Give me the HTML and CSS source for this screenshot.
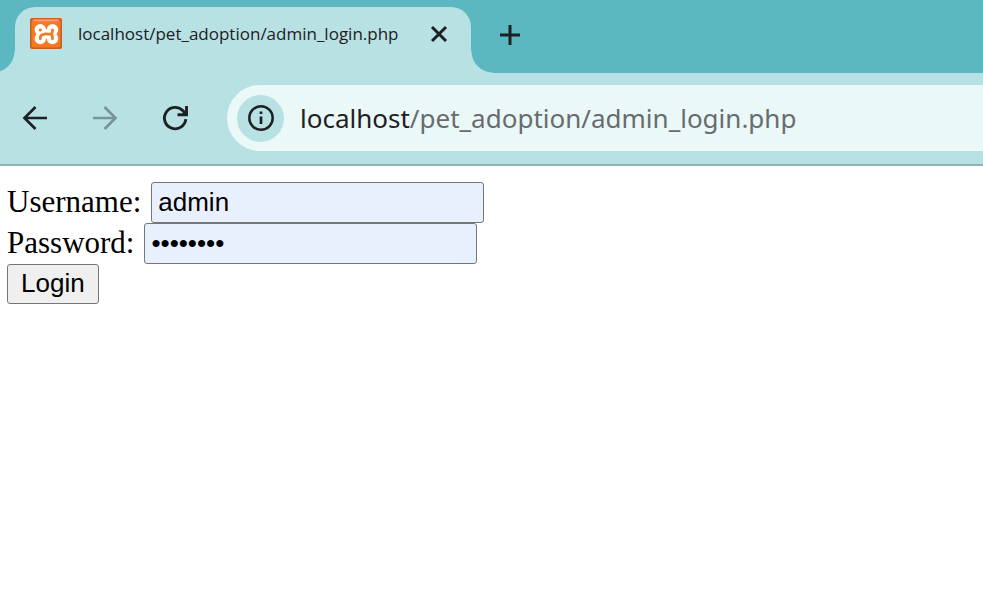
FILE: index.html
```html
<!DOCTYPE html>
<html lang="en">
<head>
<meta charset="utf-8">
<title>localhost/pet_adoption/admin_login.php</title>
<link rel="stylesheet" href="styles.css">
</head>
<body>
<header>
  <div class="tabs">
    <div class="tab">
      <svg class="favicon" viewBox="0 0 32 32" aria-hidden="true">
        <defs>
          <linearGradient id="shine" x1="0" y1="0" x2="0" y2="1"><stop offset="0" stop-color="#f6b587"/><stop offset="1" stop-color="#ee8132"/></linearGradient>
        </defs>
        <rect x="0" y="0" width="32" height="31" rx="2" fill="#c4601f"/>
        <rect x="1.5" y="1.5" width="29" height="28" rx="2" fill="#f47920"/>
        <path d="M3 1.500H29Q28 4 23 4H9Q4 4 3 1.500Z" fill="url(#shine)"/>
        <g fill="#fff">
          <circle cx="10.300" cy="11.800" r="5.700"/>
          <circle cx="22.500" cy="11.800" r="5.700"/>
          <circle cx="10.300" cy="20.500" r="5.700"/>
          <circle cx="22.500" cy="20.500" r="5.700"/>
          <rect x="6" y="11.500" width="20.500" height="9.500"/>
        </g>
        <circle cx="10.300" cy="12" r="1.600" fill="#f47920"/>
        <path d="M10.300 20.800V19Q10.500 17.200 13 16.500Q16 15.500 18 16.200H22M22.500 12V13L21.700 16.200L22.500 19.500V20.800" fill="none" stroke="#f47920" stroke-width="2.800" stroke-linecap="round" stroke-linejoin="round"/>
      </svg>
      <span class="title">localhost/pet_adoption/admin_login.php</span>
      <button class="icon close" type="button" aria-label="Close tab"><svg viewBox="0 0 16 16"><path d="M1 1L15 15M15 1L1 15" stroke-width="3"/></svg></button>
    </div>
    <button class="icon add" type="button" aria-label="New tab"><svg viewBox="0 0 20 20"><path d="M10 0V20M0 10H20" stroke-width="3"/></svg></button>
  </div>
  <nav class="toolbar" aria-label="Browser controls">
    <button class="icon nav" type="button" aria-label="Back"><svg viewBox="0 0 24 24"><path d="M24 12H2M12.500 1L1.500 12L12.500 23" stroke-width="2.700"/></svg></button>
    <button class="icon nav" type="button" aria-label="Forward" disabled><svg viewBox="0 0 24 24"><path d="M0 12H22M11.500 1L22.500 12L11.500 23" stroke-width="2.700"/></svg></button>
    <button class="icon nav" type="button" aria-label="Reload"><svg viewBox="0 0 24 24"><path d="M22.800 13.200A10.700 10.700 0 1 1 20 4.800L23 8.500M23.500 0V8.800H14.500" stroke-width="2.900"/></svg></button>
    <div class="address">
      <button class="icon info" type="button" aria-label="View site information"><svg viewBox="0 0 26 26"><circle cx="13" cy="13" r="11.700" stroke-width="2.500"/><path d="M13 11.500V19M13 6.500V9" stroke-width="2.700"/></svg></button>
      <div class="url" role="textbox" aria-label="Address" contenteditable="true" spellcheck="false"><span class="host">localhost</span>/pet_adoption/admin_login.php</div>
    </div>
  </nav>
</header>
<main>
  <form>
    <div class="field"><label for="username">Username:</label><input id="username" type="text" value="admin"></div>
    <div class="field"><label for="password">Password:</label><input id="password" type="password" value="password"></div>
    <button class="login" type="button">Login</button>
  </form>
</main>
</body>
</html>
```
FILE: styles.css
```css
* { box-sizing: border-box; }
body { margin: 0; background: #fff; }
header {
  font-family: "Segoe UI", "Open Sans", "Noto Sans", sans-serif;
  background: #b8e1e4;
  color: #1f2023;
  border-bottom: 2px solid #8fb3b5;
}
.tabs {
  display: flex;
  align-items: center;
  background: #5bb8c1;
  padding: 7px 15px 0;
}
.tab {
  position: relative;
  display: flex;
  align-items: center;
  width: 456px;
  height: 66px;
  padding: 0 24px 12px 15px;
  border-radius: 20px 20px 0 0;
  background: #b8e1e4;
}
.tab::before, .tab::after {
  content: "";
  position: absolute;
  bottom: 0;
  width: 22px;
  height: 22px;
}
.tab::before { right: 100%; background: radial-gradient(circle at 0 0, transparent 21px, #b8e1e4 22px); }
.tab::after { left: 100%; background: radial-gradient(circle at 100% 0, transparent 21px, #b8e1e4 22px); }
.favicon { width: 32px; height: 32px; margin-right: 16px; }
.title { flex: 1; font-size: 17px; line-height: 24px; white-space: nowrap; }
.icon {
  display: flex;
  align-items: center;
  justify-content: center;
  flex: none;
  border: 0;
  padding: 0;
  background: none;
  color: #1f2023;
}
.icon svg { display: block; width: 100%; fill: none; stroke: currentColor; overflow: visible; }
.close { width: 16px; }
.add { width: 20px; margin: 0 0 11px 29px; }
.toolbar {
  display: flex;
  align-items: center;
  padding: 12px 0 13px 23px;
}
.nav { width: 24px; margin-right: 46px; }
.nav:disabled { color: #789497; }
.address {
  flex: 1;
  display: flex;
  align-items: center;
  gap: 16px;
  height: 66px;
  margin-left: -6px;
  padding-left: 10px;
  border-radius: 33px 0 0 33px;
  background: #ebf8f8;
}
.info { width: 47px; height: 47px; border-radius: 50%; background: #b8e1e4; }
.info svg { width: 26px; }
.url { flex: 1; font-family: "Segoe UI", "Noto Sans", sans-serif; font-size: 26px; line-height: 36px; color: #686c6e; white-space: nowrap; outline: 0; }
.host { color: #1f2023; }
main { padding: 16px 7px; font: 31px/39px "Liberation Serif", serif; color: #000; }
.field { display: flex; align-items: flex-start; gap: 10px; }
input, .login {
  font: 26px/30px "Liberation Sans", sans-serif;
  color: #000;
  border: 1px solid #767676;
  border-radius: 3px;
}
input { width: 333px; height: 41px; padding: 0 6px; background: #e8f0fe; }
.login { display: block; height: 40px; padding: 0 13px 2px; background: #efefef; }
```
